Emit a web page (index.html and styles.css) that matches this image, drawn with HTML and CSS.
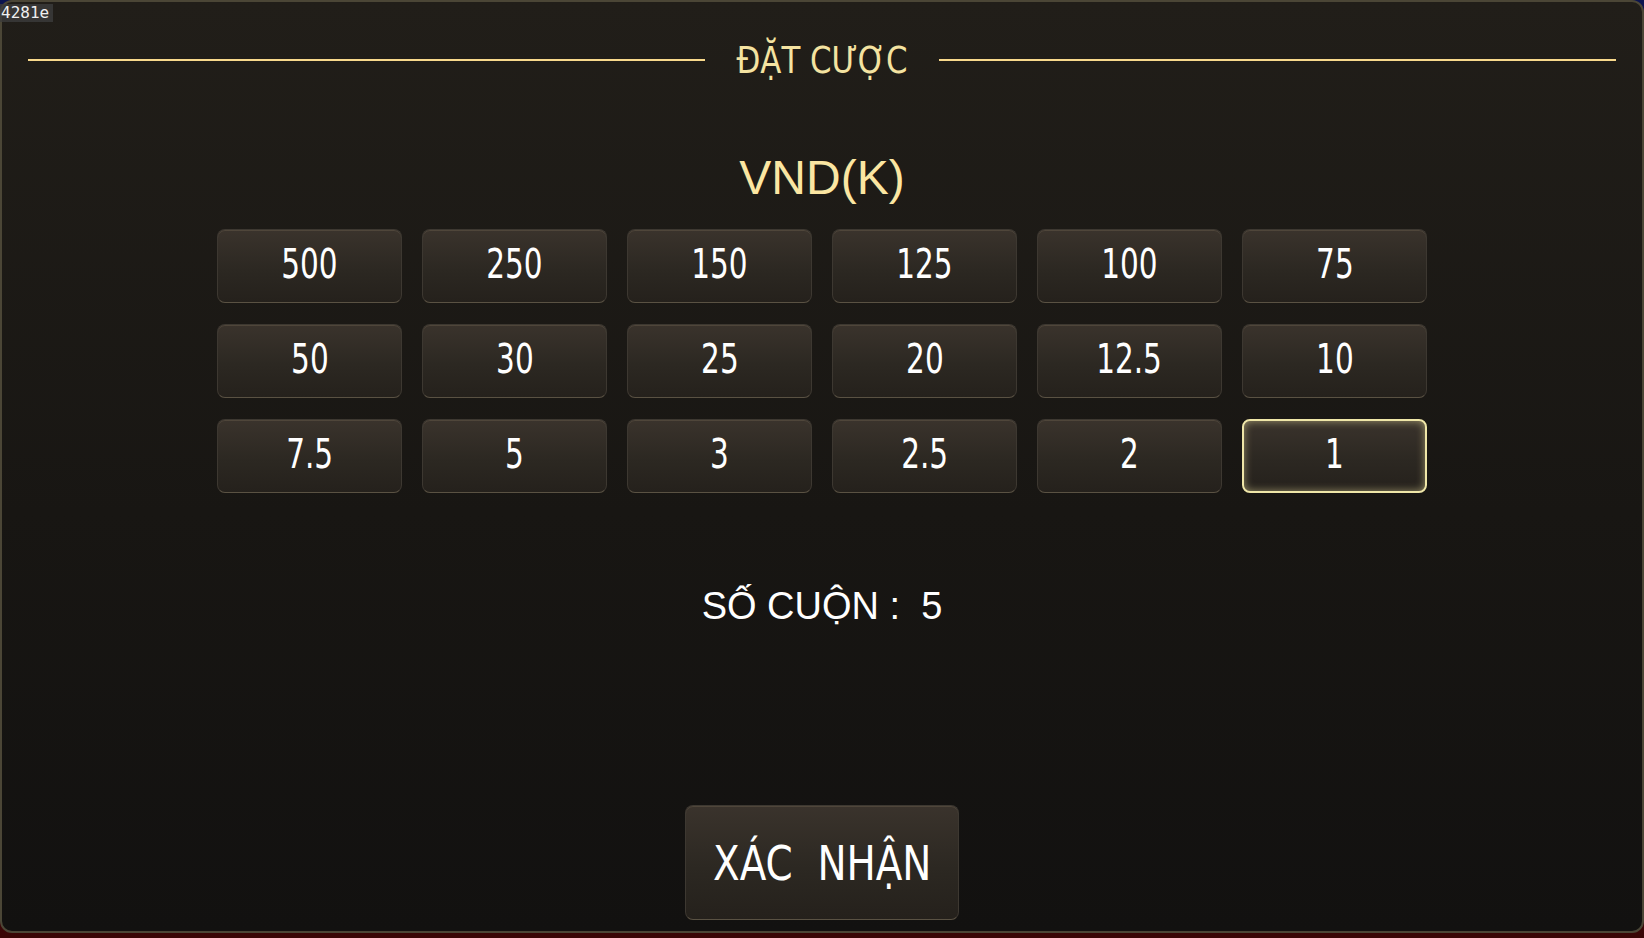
FILE: index.html
```html
<!DOCTYPE html>
<html lang="vi">
<head>
    <meta charset="UTF-8">
    <meta name="viewport" content="width=device-width, initial-scale=1.0">
    <title>Đặt cược</title>
    <link rel="stylesheet" href="styles.css">
</head>
<body>
    <div class="debug-tag">4281e</div>

    <div class="panel">
        <div class="panel-header">
            <span class="rule"></span>
            <h2><span class="narrow">ĐẶT CƯỢC</span></h2>
            <span class="rule"></span>
        </div>

        <h3 class="currency">VND(K)</h3>

        <div class="bet-grid">
            <button class="bet"><span>500</span></button>
            <button class="bet"><span>250</span></button>
            <button class="bet"><span>150</span></button>
            <button class="bet"><span>125</span></button>
            <button class="bet"><span>100</span></button>
            <button class="bet"><span>75</span></button>
            <button class="bet"><span>50</span></button>
            <button class="bet"><span>30</span></button>
            <button class="bet"><span>25</span></button>
            <button class="bet"><span>20</span></button>
            <button class="bet"><span>12.5</span></button>
            <button class="bet"><span>10</span></button>
            <button class="bet"><span>7.5</span></button>
            <button class="bet"><span>5</span></button>
            <button class="bet"><span>3</span></button>
            <button class="bet"><span>2.5</span></button>
            <button class="bet"><span>2</span></button>
            <button class="bet selected"><span>1</span></button>
        </div>

        <div class="reels">SỐ CUỘN :&nbsp; 5</div>

        <button class="confirm"><span class="narrow">XÁC&nbsp; NHẬN</span></button>
    </div>
</body>
</html>
```

FILE: styles.css
```css
body {
    margin: 0;
    height: 938px;
    overflow: hidden;
    background: linear-gradient(to bottom, #0b1450 0%, #1a0d1a 50%, #3a0606 100%);
    font-family: "Liberation Sans", Arial, sans-serif;
}

.debug-tag {
    position: absolute;
    top: 4px;
    left: -3px;
    padding: 0 4px;
    line-height: 18px;
    font-family: "DejaVu Sans Mono", monospace;
    font-size: 16px;
    color: #f0f0f0;
    background: rgba(60, 60, 60, 0.8);
    z-index: 2;
}

.panel {
    box-sizing: border-box;
    height: 933px;
    border: 2px solid #4b4636;
    border-radius: 12px;
    background: linear-gradient(to bottom, #211e19 0%, #181613 55%, #121110 100%);
    display: flex;
    flex-direction: column;
    align-items: center;
}

/* the game font is condensed; squeeze DejaVu Condensed a bit more */
.narrow {
    display: inline-block;
    transform: scaleX(0.9);
}

.panel-header {
    align-self: stretch;
    display: flex;
    align-items: center;
    gap: 22px;
    height: 40px;
    margin-top: 38px;
    padding: 0 26px;
}

.rule {
    flex: 1;
    height: 2px;
    background: #f8d98c;
}

.panel-header h2 {
    margin: 0;
    font-family: "DejaVu Sans Condensed", sans-serif;
    font-weight: normal;
    font-size: 38px;
    line-height: 40px;
    color: #f4e3a1;
}

.currency {
    margin: 74px 0 0;
    font-weight: normal;
    font-size: 48px;
    line-height: 47px;
    color: #fbe6a2;
}

.bet-grid {
    display: grid;
    grid-template-columns: repeat(6, 185px);
    grid-auto-rows: 74px;
    column-gap: 20px;
    row-gap: 21px;
    margin-top: 28px;
}

.bet,
.confirm {
    box-sizing: border-box;
    border: 1px solid #3d3831;
    border-bottom-color: #5a5243;
    border-radius: 8px;
    background: linear-gradient(to bottom, #3a332c 0%, #2c2822 55%, #25211c 100%);
    color: #ffffff;
    font-family: "DejaVu Sans Condensed", sans-serif;
    cursor: pointer;
    box-shadow: inset 0 1px 0 rgba(120, 105, 85, 0.35);
}

.bet {
    font-size: 40px;
    padding: 0 0 4px;
}

.bet span {
    display: inline-block;
    transform: scaleX(0.82);
}

.bet.selected {
    border: 2px solid #efe6a8;
    box-shadow: inset 0 0 9px rgba(240, 228, 160, 0.55);
}

.reels {
    margin-top: 95px;
    font-size: 38px;
    line-height: 37px;
    color: #ffffff;
}

.confirm {
    width: 274px;
    height: 115px;
    margin-top: 180px;
    font-size: 48px;
    padding: 0;
}
```
